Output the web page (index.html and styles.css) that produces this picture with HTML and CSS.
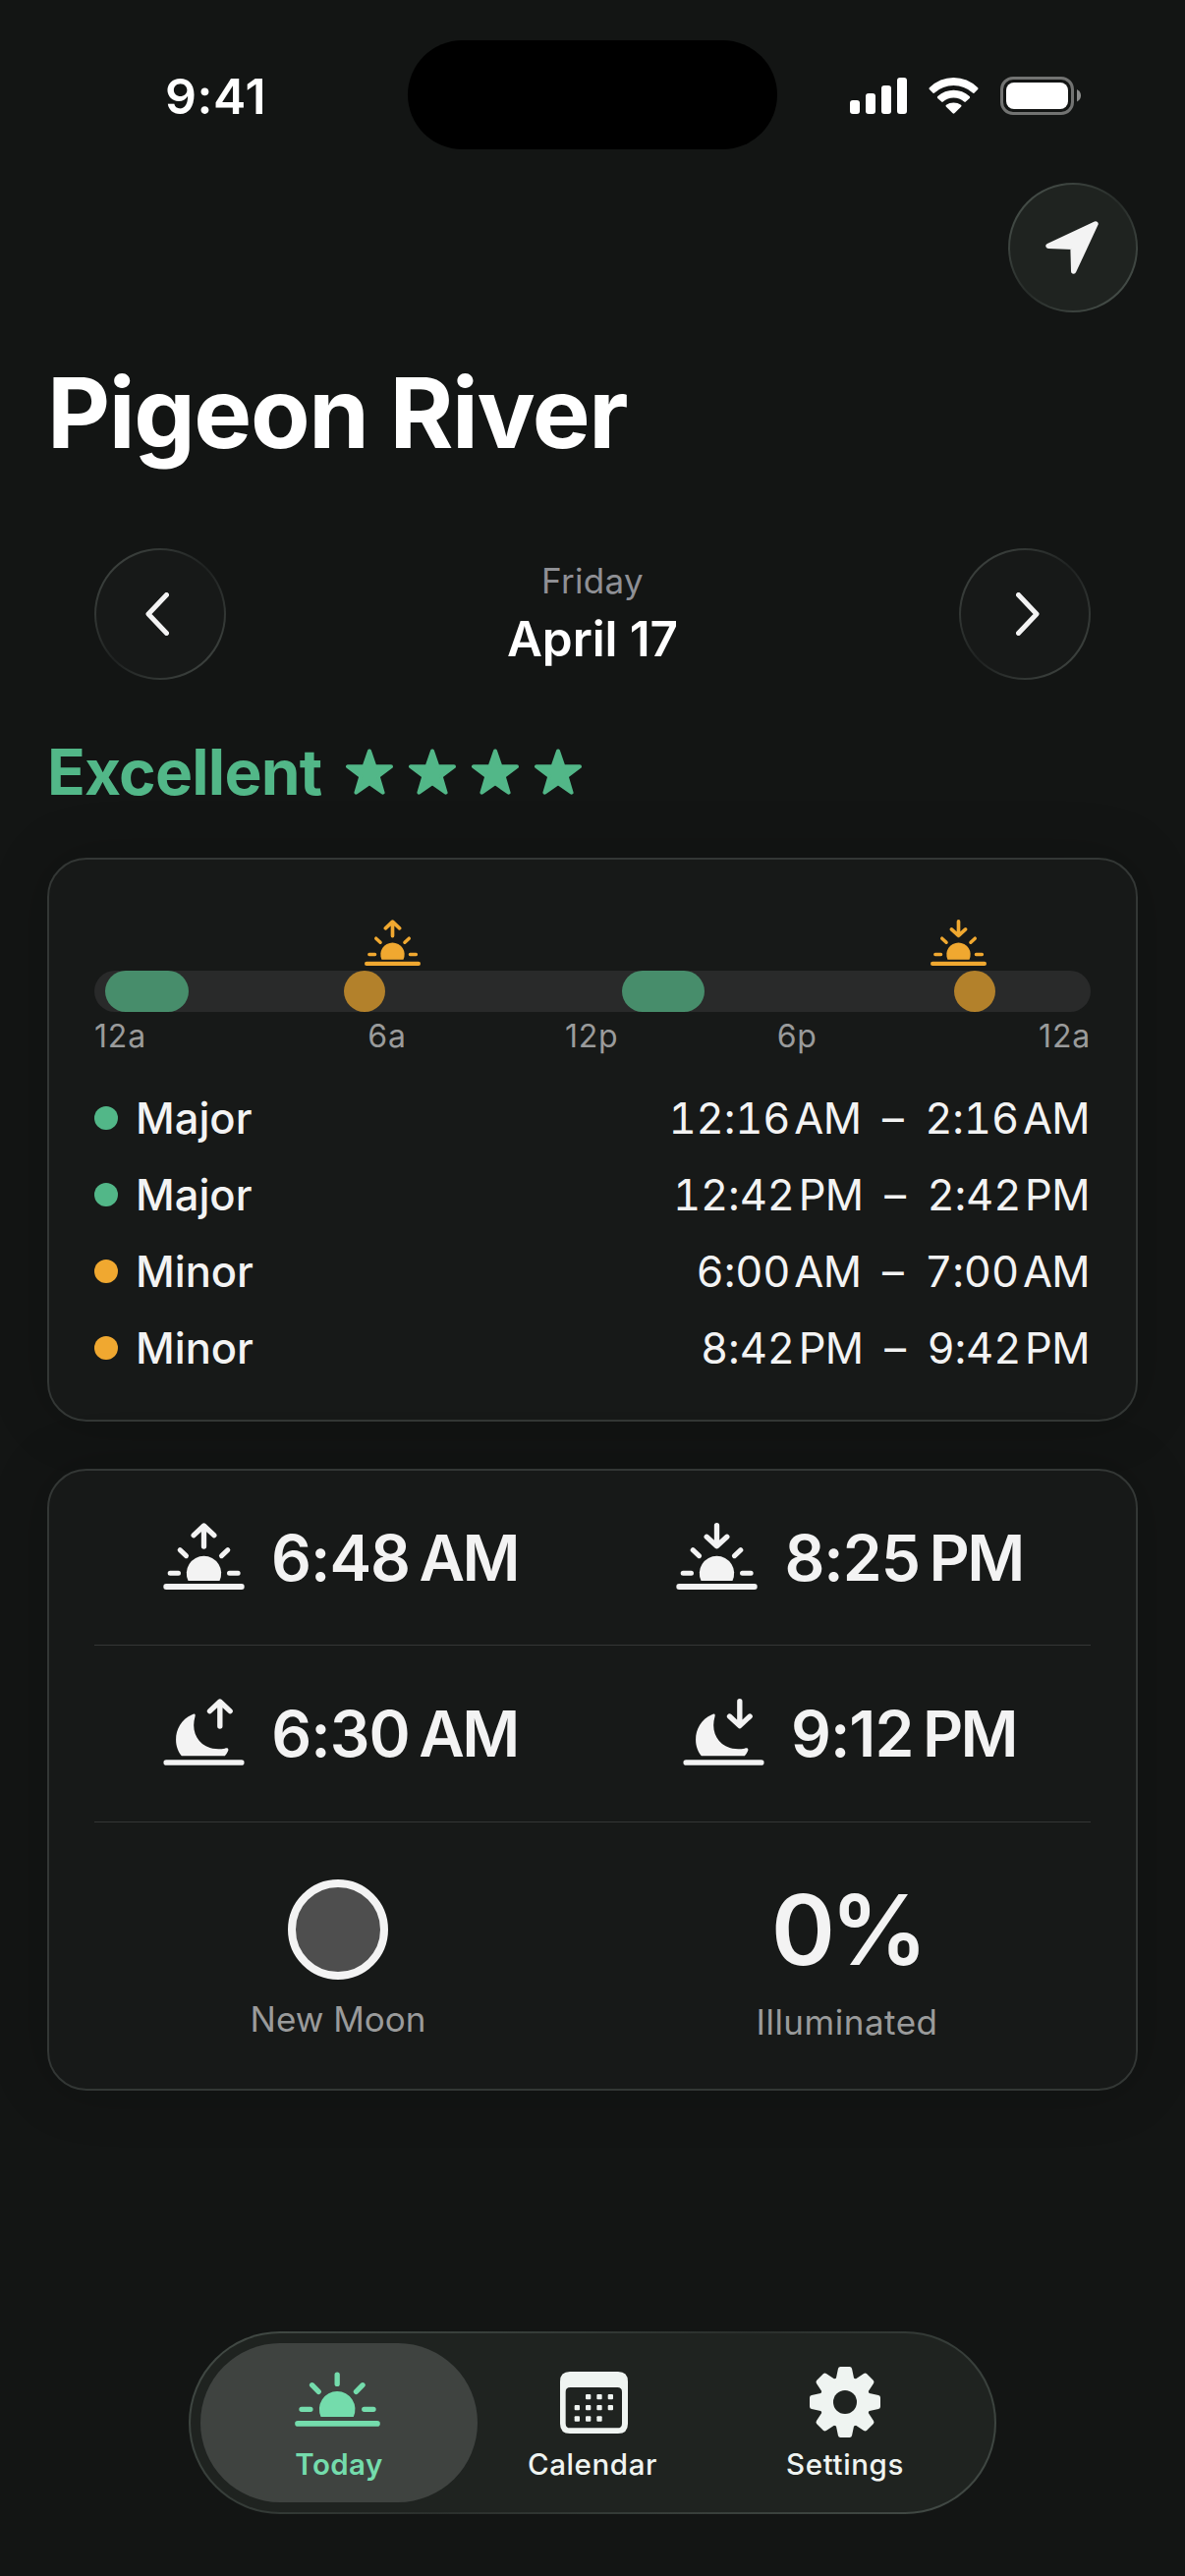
FILE: index.html
```html
<!DOCTYPE html>
<html lang="en">
<head>
    <meta charset="UTF-8">
    <meta name="viewport" content="width=device-width, initial-scale=1.0">
    <title>Pigeon River</title>
    <link rel="stylesheet" href="styles.css">
</head>
<body>
    <!-- shared icons -->
    <svg class="sprite" width="0" height="0">
        <symbol id="sun" viewBox="0 0 248 204">
            <path d="M76 177 A53 53 0 1 1 172 177 Z" fill="currentColor" stroke="none"/>
            <path d="M9 195H239" stroke-width="18"/>
            <path d="M21 154H46M202 154H228M51 83L70 101M197 83L178 101" stroke-width="15"/>
        </symbol>
        <symbol id="moon" viewBox="0 0 248 204">
            <path d="M88 49C96 44 99 48 97 55C80 112 120 164 188 152C198 149 201 154 197 161Q194 168 188 175H56C26 140 34 72 88 49Z" fill="currentColor" stroke="none"/>
            <path d="M9 195H239" stroke-width="17"/>
        </symbol>
        <symbol id="star" viewBox="0 0 50 48">
            <path d="M25 2.5L30.4 18.2H47L33.7 28.2L38.6 44.7L25 35.2L11.4 44.7L16.3 28.2L3 18.2H19.6Z" fill="currentColor" stroke="currentColor" stroke-width="4" stroke-linejoin="round"/>
        </symbol>
    </svg>

    <div class="status-bar">
        <div class="clock">9:41</div>
        <div class="island"></div>
        <div class="status-icons">
            <svg width="58" height="37" viewBox="0 0 58 37">
                <g fill="#fff">
                    <rect x="0" y="23" width="10" height="14" rx="3"/>
                    <rect x="16" y="16" width="10" height="21" rx="3"/>
                    <rect x="32" y="8" width="10" height="29" rx="3"/>
                    <rect x="48" y="0" width="10" height="37" rx="3"/>
                </g>
            </svg>
            <svg width="51" height="37" viewBox="0 0 51 37">
                <g fill="#fff">
                    <path d="M0.8 10.2Q0 11.2 0.9 12.1L4.6 15.7Q5.3 16.3 6.1 15.5Q14.5 8 25.5 8T44.9 15.5Q45.7 16.3 46.4 15.7L50.1 12.1Q51 11.2 50.2 10.2Q39.5 0 25.5 0T0.8 10.2Z"/>
                    <path d="M9.3 19Q8.3 20 9.2 20.9L13.2 24.6Q14 25.2 14.8 24.5Q19.5 20.6 25.5 20.6T36.2 24.5Q37 25.2 37.8 24.6L41.8 20.9Q42.7 20 41.7 19Q34.5 12.8 25.5 12.8T9.3 19Z"/>
                    <path d="M18 27.8Q17 28.8 18 29.8L24.6 36.3Q25.5 37.1 26.4 36.3L33 29.8Q34 28.8 33 27.8Q29.7 25.4 25.5 25.4T18 27.8Z"/>
                </g>
            </svg>
            <svg width="82" height="39" viewBox="0 0 82 39">
                <rect x="1.5" y="1.5" width="72" height="36" rx="11.5" fill="none" stroke="#727372" stroke-width="3"/>
                <rect x="6" y="6" width="63" height="27" rx="8" fill="#fff"/>
                <path d="M78 13Q82 15 82 19.2T78 25.5Z" fill="#8a8b8a"/>
            </svg>
        </div>
    </div>

    <div class="toolbar">
        <button class="round-button location">
            <svg width="54" height="54" viewBox="0 0 162 162">
                <path d="M153 9L9 76L84 79L86 153Z" fill="#f3f3f3" stroke="#f3f3f3" stroke-width="16" stroke-linejoin="round"/>
            </svg>
        </button>
    </div>

    <h1>Pigeon River</h1>

    <div class="date-nav">
        <button class="round-button">
            <svg class="prev" width="24" height="44" viewBox="0 0 24 44"><path d="M21.5 2.5L3 22L21.5 41.5"/></svg>
        </button>
        <div class="date">
            <div class="weekday">Friday</div>
            <div class="day">April 17</div>
        </div>
        <button class="round-button">
            <svg class="next" width="24" height="44" viewBox="0 0 24 44"><path d="M2.5 2.5L21 22L2.5 41.5"/></svg>
        </button>
    </div>

    <div class="rating">
        <span>Excellent</span>
        <div class="stars">
            <svg><use href="#star"/></svg>
            <svg><use href="#star"/></svg>
            <svg><use href="#star"/></svg>
            <svg><use href="#star"/></svg>
        </div>
    </div>

    <div class="card periods">
        <div class="track">
            <div class="pill major" style="left: 1.11%; width: 8.33%"></div>
            <div class="pill minor" style="left: 25%; width: 4.17%"></div>
            <div class="pill major" style="left: 52.92%; width: 8.33%"></div>
            <div class="pill minor" style="left: 86.25%; width: 4.17%"></div>
            <svg class="marker" style="left: 29.88%" viewBox="0 0 248 204">
                <use href="#sun"/><path d="M124 72V10M93 38L124 9L155 38" stroke-width="16"/>
            </svg>
            <svg class="marker" style="left: 86.72%" viewBox="0 0 248 204">
                <use href="#sun"/><path d="M124 8V70M93 43L124 71L155 43" stroke-width="16"/>
            </svg>
        </div>
        <div class="hours">
            <span>12a</span><span>6a</span><span>12p</span><span>6p</span><span>12a</span>
        </div>
        <div class="period"><i class="dot green"></i><span class="name">Major</span><span class="time">12:16&#8239;<span class="ampm">AM</span> – 2:16&#8239;<span class="ampm">AM</span></span></div>
        <div class="period"><i class="dot green"></i><span class="name">Major</span><span class="time">12:42&#8239;<span class="ampm">PM</span> – 2:42&#8239;<span class="ampm">PM</span></span></div>
        <div class="period"><i class="dot orange"></i><span class="name">Minor</span><span class="time">6:00&#8239;<span class="ampm">AM</span> – 7:00&#8239;<span class="ampm">AM</span></span></div>
        <div class="period"><i class="dot orange"></i><span class="name">Minor</span><span class="time">8:42&#8239;<span class="ampm">PM</span> – 9:42&#8239;<span class="ampm">PM</span></span></div>
    </div>

    <div class="card astro">
        <div class="astro-row">
            <div class="event">
                <svg class="icon" viewBox="0 0 248 204"><use href="#sun"/><path d="M124 72V10M93 38L124 9L155 38" stroke-width="16"/></svg>
                <span>6:48&#8239;<span class="ampm">AM</span></span>
            </div>
            <div class="event">
                <svg class="icon" viewBox="0 0 248 204"><use href="#sun"/><path d="M124 8V70M93 43L124 71L155 43" stroke-width="16"/></svg>
                <span>8:25&#8239;<span class="ampm">PM</span></span>
            </div>
        </div>
        <div class="astro-row">
            <div class="event">
                <svg class="icon" viewBox="0 0 248 204"><use href="#moon"/><path d="M173 84V10M142 38L173 9L204 38" stroke-width="16"/></svg>
                <span>6:30&#8239;<span class="ampm">AM</span></span>
            </div>
            <div class="event">
                <svg class="icon" viewBox="0 0 248 204"><use href="#moon"/><path d="M173 8V82M142 54L173 83L204 54" stroke-width="16"/></svg>
                <span>9:12&#8239;<span class="ampm">PM</span></span>
            </div>
        </div>
        <div class="astro-row phase">
            <div class="stat">
                <div class="new-moon"></div>
                <div class="caption">New Moon</div>
            </div>
            <div class="stat">
                <div class="percent">0%</div>
                <div class="caption illuminated">Illuminated</div>
            </div>
        </div>
    </div>

    <nav class="tab-bar">
        <a class="tab active">
            <div class="tab-icon today-icon">
                <svg width="87" height="56" viewBox="0 0 262 168">
                    <path d="M80 138A55 55 0 1 1 180 138Z" fill="currentColor" stroke="none"/>
                    <path d="M9 159H253" stroke-width="17"/>
                    <path d="M130 9V37M53 41L73 61M208 41L188 61M21 115H48M213 115H241" stroke-width="16"/>
                </svg>
            </div>
            <span>Today</span>
        </a>
        <a class="tab">
            <div class="tab-icon calendar-icon">
                <svg width="69" height="63" viewBox="0 0 207 189">
                    <path fill="#eff4f1" fill-rule="evenodd" stroke="none" d="M30 0H177Q207 0 207 30V159Q207 189 177 189H30Q0 189 0 159V30Q0 0 30 0ZM31 48Q17 48 17 62V158Q17 172 31 172H175Q189 172 189 158V62Q189 48 175 48Z"/>
                    <g fill="#eff4f1" stroke="none">
                        <rect x="78" y="69" width="16" height="16" rx="3"/>
                        <rect x="112" y="69" width="16" height="16" rx="3"/>
                        <rect x="146" y="69" width="16" height="16" rx="3"/>
                        <rect x="44" y="102" width="16" height="16" rx="3"/>
                        <rect x="78" y="102" width="16" height="16" rx="3"/>
                        <rect x="112" y="102" width="16" height="16" rx="3"/>
                        <rect x="146" y="102" width="16" height="16" rx="3"/>
                        <rect x="44" y="136" width="16" height="16" rx="3"/>
                        <rect x="78" y="136" width="16" height="16" rx="3"/>
                        <rect x="112" y="136" width="16" height="16" rx="3"/>
                    </g>
                </svg>
            </div>
            <span>Calendar</span>
        </a>
        <a class="tab settings">
            <div class="tab-icon">
                <svg width="72" height="72" viewBox="-36 -36 72 72">
                    <g fill="#eff4f1" stroke="#eff4f1" stroke-width="5" stroke-linejoin="round">
                        <circle r="23.5"/>
                        <path id="teeth" d="M-7 -22L-4.6 -33.5H4.6L7 -22ZM-7 22L-4.6 33.5H4.6L7 22ZM-22 -7L-33.5 -4.6V4.6L-22 7ZM22 -7L33.5 -4.6V4.6L22 7Z"/>
                        <use href="#teeth" transform="rotate(45)"/>
                    </g>
                    <circle r="12" fill="#1f2320" stroke="none"/>
                </svg>
            </div>
            <span>Settings</span>
        </a>
    </nav>
</body>
</html>
```
FILE: styles.css
```css
* {
    box-sizing: border-box;
}
body {
    margin: 0;
    width: 1206px;
    height: 2622px;
    overflow: hidden;
    background: #131514;
    color: #f3f3f3;
    font-family: Inter, "Liberation Sans", sans-serif;
}
svg {
    display: block;
    fill: none;
    stroke: currentColor;
    stroke-linecap: round;
    stroke-linejoin: round;
}
.sprite {
    position: absolute;
}

/* status bar */
.status-bar {
    display: grid;
    grid-template-columns: 415px 376px 1fr;
    align-items: center;
    height: 152px;
    padding-top: 41px;
}
.clock {
    padding-left: 168px;
    padding-top: 3px;
    color: #fff;
    font-size: 50px;
    font-weight: 600;
    letter-spacing: 0.6px;
}
.island {
    height: 111px;
    border-radius: 56px;
    background: #000;
}
.status-icons {
    display: flex;
    align-items: center;
    gap: 22px;
    padding-left: 74px;
    padding-top: 2px;
}
.status-icons svg {
    stroke: none;
}

/* header */
.toolbar {
    display: flex;
    justify-content: flex-end;
    margin-top: 34px;
    padding-right: 48px;
}
.round-button {
    display: flex;
    align-items: center;
    justify-content: center;
    width: 134px;
    height: 134px;
    padding: 0;
    border: 2px solid transparent;
    border-radius: 50%;
    background: linear-gradient(#171918, #171918) padding-box, linear-gradient(135deg, #3a3f3c 15%, #1f2221 50%, #3a3f3c 85%) border-box;
    color: #f3f3f3;
}
.round-button path {
    stroke-width: 5;
}
.location {
    width: 132px;
    height: 132px;
    background: linear-gradient(#1f2320, #1f2320) padding-box, linear-gradient(135deg, #434b46 15%, #272c29 50%, #434b46 85%) border-box;
}
.location svg {
    margin-right: 2px;
}
.location path {
    stroke-width: 16;
}
h1 {
    margin: 42px 0 0 48px;
    color: #fff;
    font-size: 99px;
    font-weight: 700;
    line-height: 120px;
    letter-spacing: -1.4px;
}
.date-nav {
    display: flex;
    align-items: center;
    justify-content: space-between;
    margin-top: 78px;
    padding: 0 96px;
}
.prev {
    margin-right: 7px;
}
.next {
    margin-left: 6px;
}
.date {
    padding-bottom: 8px;
    text-align: center;
    line-height: 59px;
}
.weekday {
    color: #8f9095;
    font-size: 35px;
    letter-spacing: 0.3px;
}
.day {
    color: #fff;
    font-size: 49.5px;
    font-weight: 600;
    letter-spacing: -0.1px;
}
.rating {
    display: flex;
    align-items: center;
    gap: 24px;
    margin-top: 54px;
    padding-left: 48px;
    color: #52b788;
    font-size: 64px;
    font-weight: 700;
    line-height: 80px;
    letter-spacing: -0.8px;
}
.stars {
    display: flex;
    gap: 14px;
}
.stars svg {
    width: 50px;
    height: 48px;
}

/* cards */
.card {
    margin: 47px 48px 0;
    padding: 0 46px;
    border: 2px solid #333735;
    border-radius: 40px;
    background: #171918;
    box-shadow: 0 0 60px rgba(0, 0, 0, 0.2);
}
.periods {
    padding-top: 113px;
    padding-bottom: 46px;
}
.track {
    position: relative;
    height: 42px;
    border-radius: 21px;
    background: #292a2a;
}
.pill {
    position: absolute;
    top: 0;
    height: 42px;
    border-radius: 21px;
}
.major {
    background: #478d6b;
}
.minor {
    background: #b3812b;
}
.marker {
    position: absolute;
    top: -52px;
    width: 57px;
    height: 47px;
    margin-left: -28px;
    color: #f0a830;
}
.hours {
    display: flex;
    justify-content: space-between;
    margin: 7px 0 38px;
    color: #9a9b9b;
    font-size: 32px;
    line-height: 36px;
    letter-spacing: 0.8px;
}
.hours span:first-child,
.hours span:last-child {
    width: 117px;
}
.hours span:last-child {
    text-align: right;
}
.period {
    display: flex;
    align-items: center;
    margin-bottom: 24px;
    font-size: 43.5px;
    line-height: 54px;
}
.period:last-child {
    margin-bottom: 0;
}
.dot {
    width: 24px;
    height: 24px;
    margin-right: 18px;
    border-radius: 50%;
}
.green {
    background: #52b788;
}
.orange {
    background: #f0a830;
}
.name {
    font-weight: 500;
}
.time {
    margin-left: auto;
    padding-right: 1px;
    font-variant-numeric: tabular-nums;
    letter-spacing: -0.1px;
    word-spacing: 10px;
}
.time .ampm {
    margin-left: -4px;
    letter-spacing: -0.6px;
}

.astro {
    margin-top: 48px;
    height: 633px;
}
.astro-row {
    display: grid;
    grid-template-columns: 1fr 1fr;
    column-gap: 22px;
    height: 180px;
    border-bottom: 1px solid #343635;
}
.astro-row:first-child {
    height: 178px;
}
.event {
    display: flex;
    align-items: center;
    justify-content: center;
    gap: 27px;
    padding-left: 5px;
    font-size: 64px;
    font-weight: 600;
    letter-spacing: -1px;
}
.event .ampm {
    letter-spacing: -2.6px;
}
.icon {
    width: 83px;
    height: 68px;
    margin-bottom: 4px;
}
.phase {
    height: auto;
    padding-top: 58px;
    border-bottom: none;
}
.stat {
    display: flex;
    flex-direction: column;
    align-items: center;
}
.new-moon {
    width: 102px;
    height: 102px;
    border: 8.5px solid #f3f3f3;
    border-radius: 50%;
    background: #4e4e4e;
}
.percent {
    font-size: 99px;
    font-weight: 600;
    line-height: 102px;
    letter-spacing: -5px;
}
.caption {
    margin-top: 20px;
    color: #9a9b9b;
    font-size: 35px;
    line-height: 40px;
}
.illuminated {
    margin-top: 23px;
    letter-spacing: 0.5px;
}

/* bottom tabs */
.tab-bar {
    display: flex;
    width: 822px;
    height: 186px;
    margin: 245px auto 0;
    padding: 10px;
    border: 2px solid transparent;
    border-radius: 93px;
    background: linear-gradient(#1f2320, #1f2320) padding-box, linear-gradient(150deg, #434b46, #363d39 30%, #2a2f2c 50%, #363d39 70%, #434b46) border-box;
}
.tab {
    display: flex;
    flex: none;
    flex-direction: column;
    align-items: center;
    width: 282px;
    height: 162px;
    padding-top: 24px;
    border-radius: 81px;
    color: #eff4f1;
    font-size: 29.5px;
    font-weight: 500;
    line-height: 30px;
    letter-spacing: 0.6px;
}
.tab + .tab {
    margin-left: -24px;
}
.settings {
    padding-right: 2px;
}
.active {
    background: #3f4340;
    color: #74dcac;
    font-weight: 600;
    letter-spacing: 0.4px;
}
.tab-icon {
    display: flex;
    align-items: center;
    height: 72px;
    margin-bottom: 12px;
}
.today-icon {
    padding-right: 3px;
    padding-bottom: 6px;
}
.calendar-icon {
    padding-left: 2px;
}
```
